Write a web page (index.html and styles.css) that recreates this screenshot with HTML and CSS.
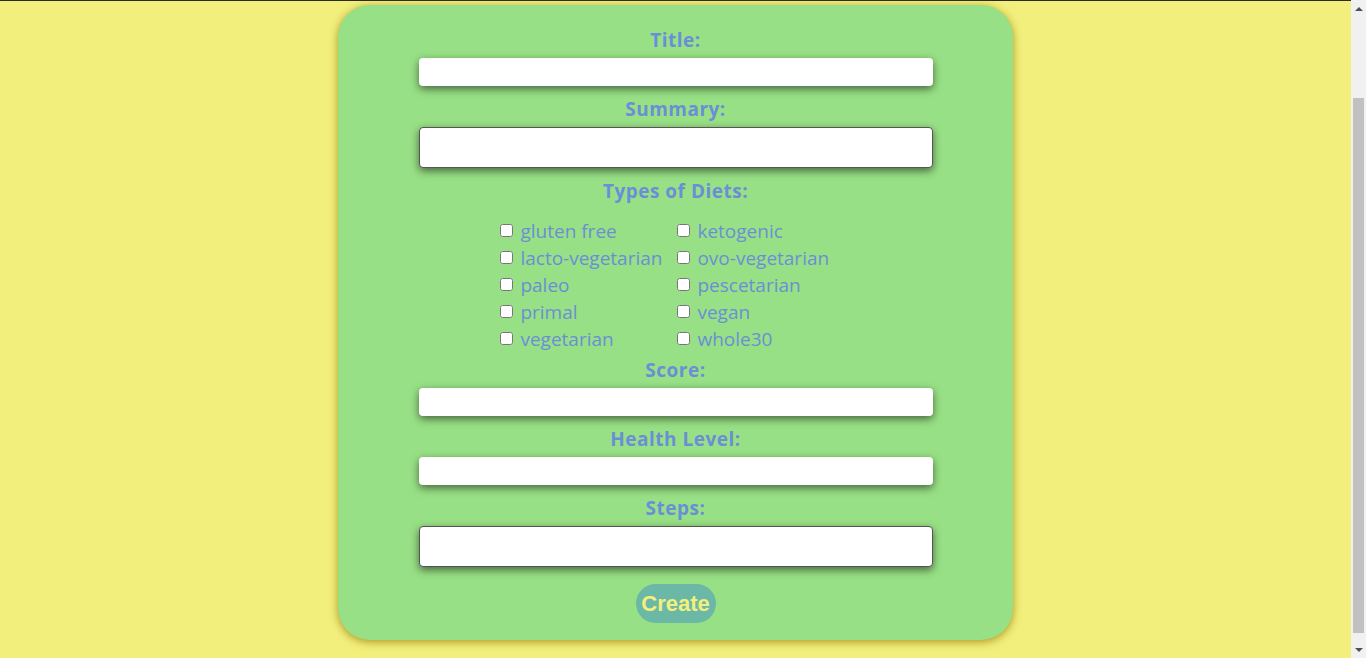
FILE: index.html
```html
<!DOCTYPE html>
<html lang="en">
<head>
<meta charset="utf-8">
<title>Create Recipe</title>
<link rel="stylesheet" href="styles.css">
</head>
<body>
<div class="viewport">
  <header class="nav"></header>
  <main class="page">
    <form class="card">
      <label class="field-label" for="title">Title:</label>
      <input class="text-input" id="title" type="text">
      <label class="field-label" for="summary">Summary:</label>
      <textarea class="text-area" id="summary"></textarea>
      <span class="field-label diets-label">Types of Diets:</span>
      <div class="diets">
        <label class="diet"><input type="checkbox"> gluten free</label>
        <label class="diet"><input type="checkbox"> ketogenic</label>
        <label class="diet"><input type="checkbox"> lacto-vegetarian</label>
        <label class="diet"><input type="checkbox"> ovo-vegetarian</label>
        <label class="diet"><input type="checkbox"> paleo</label>
        <label class="diet"><input type="checkbox"> pescetarian</label>
        <label class="diet"><input type="checkbox"> primal</label>
        <label class="diet"><input type="checkbox"> vegan</label>
        <label class="diet"><input type="checkbox"> vegetarian</label>
        <label class="diet"><input type="checkbox"> whole30</label>
      </div>
      <label class="field-label" for="score">Score:</label>
      <input class="text-input" id="score" type="text">
      <label class="field-label" for="health">Health Level:</label>
      <input class="text-input" id="health" type="text">
      <label class="field-label" for="steps">Steps:</label>
      <textarea class="text-area" id="steps"></textarea>
      <button class="create" type="button">Create</button>
    </form>
  </main>
</div>
<aside class="scrollbar">
  <div class="sb-arrow sb-up"><span class="tri tri-up"></span></div>
  <div class="sb-track"><div class="sb-thumb"></div></div>
  <div class="sb-arrow sb-down"><span class="tri tri-down"></span></div>
</aside>
</body>
</html>
```
FILE: styles.css
```css
html, body {
  margin: 0;
  padding: 0;
}
body {
  background: #f2ef7d;
  font-family: "Open Sans", "DejaVu Sans", sans-serif;
  display: flex;
  height: 658px;
  overflow: hidden;
}
.viewport {
  flex: 1;
  min-width: 0;
}
.nav {
  height: 1px;
  background: #2b2a1c;
}
.page {
  padding-top: 4px;
}
.card {
  width: 50%;
  margin: 0 auto;
  box-sizing: border-box;
  height: 635px;
  background: #98e085;
  border-radius: 32px;
  box-shadow: 0 2px 9px rgba(150, 120, 0, 0.75);
  display: flex;
  flex-direction: column;
  align-items: center;
  padding-top: 24px;
}
.field-label {
  display: block;
  font-weight: 700;
  font-size: 19px;
  line-height: 23px;
  color: #6a8fd6;
  letter-spacing: 0.5px;
  margin-bottom: 6px;
}
.text-input {
  width: 514px;
  height: 28px;
  box-sizing: border-box;
  border: none;
  border-radius: 4px;
  background: #fff;
  box-shadow: 0 3px 9px rgba(0, 0, 0, 0.55);
  margin: 0 0 12px;
}
.text-area {
  width: 514px;
  height: 41px;
  box-sizing: border-box;
  border: 1px solid #555;
  border-radius: 4px;
  background: #fff;
  box-shadow: 0 3px 9px rgba(0, 0, 0, 0.55);
  margin: 0 0 12px;
  resize: none;
}
.diets-label {
  margin-bottom: 14px;
}
.diets {
  display: grid;
  grid-template-columns: 177px 177px;
  grid-auto-rows: 27px;
  margin: 0 0 7px 0;
  transform: translateX(-3px);
}
.diet {
  display: flex;
  align-items: center;
  white-space: pre;
  font-size: 19px;
  color: #6a8fd6;
}
.diet input {
  width: 13px;
  height: 13px;
  margin: 0 3px 0 4px;
}
.create {
  margin-top: 5px;
  font-family: "Liberation Sans", Arial, sans-serif;
  font-weight: 700;
  font-size: 22px;
  line-height: 25px;
  color: #f2ef7d;
  background: #6cb8a7;
  border: none;
  border-radius: 20px;
  padding: 7px 5px;
  width: 80px;
  height: 39px;
}
.scrollbar {
  width: 15px;
  flex: none;
  height: 658px;
  background: #f1f1f1;
  display: flex;
  flex-direction: column;
}
.sb-arrow {
  height: 17px;
  flex: none;
  display: flex;
  align-items: center;
  justify-content: center;
}
.sb-track {
  flex: 1;
  padding-top: 81px;
  padding-bottom: 8px;
  box-sizing: border-box;
  display: flex;
  flex-direction: column;
}
.sb-thumb {
  flex: 1;
  margin: 0 2px;
  background: #c1c1c1;
}
.tri {
  width: 0;
  height: 0;
  border-left: 4px solid transparent;
  border-right: 4px solid transparent;
}
.tri-up {
  border-bottom: 4px solid #505050;
}
.tri-down {
  border-top: 4px solid #505050;
}
```
